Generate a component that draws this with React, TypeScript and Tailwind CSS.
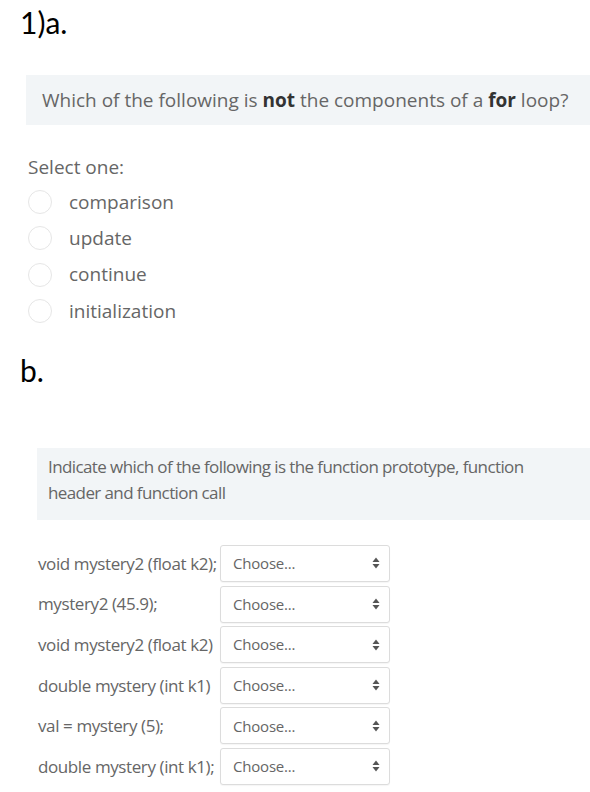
import React from 'react';

const options = ['comparison', 'update', 'continue', 'initialization'];

const rows = [
  'void mystery2 (float k2);',
  'mystery2 (45.9);',
  'void mystery2 (float k2)',
  'double mystery (int k1)',
  'val = mystery (5);',
  'double mystery (int k1);',
];

function UpDown() {
  return (
    <svg width="8" height="12" viewBox="0 0 8 12" className="shrink-0">
      <path d="M4 0.5 L7.5 5 L0.5 5 Z" fill="#555" />
      <path d="M4 11.5 L7.5 7 L0.5 7 Z" fill="#555" />
    </svg>
  );
}

function App() {
  return (
    <div className="w-[590px] h-[792px] bg-white overflow-hidden font-['Open_Sans',sans-serif]">
      <div className="pl-[20px] pt-[3px] text-[30px] leading-[38px] text-black font-['Lato',sans-serif]">1)a.</div>

      <div className="ml-[26px] mt-[34px] h-[50px] bg-[#f2f5f7] pl-[16px] flex items-center text-[19px] text-[#666] whitespace-nowrap">
        <span>
          Which of the following is <b className="font-bold text-[#333]">not</b> the components of a{' '}
          <b className="font-bold text-[#333]">for</b> loop?
        </span>
      </div>

      <div className="ml-[28px] mt-[30px] text-[19px] leading-[24px] text-[#666]">Select one:</div>

      <div className="mt-[5px] ml-[28px] flex flex-col">
        {options.map((o) => (
          <div key={o} className="h-[36.3px] flex items-center">
            <span className="w-[24px] h-[24px] rounded-full border border-[#e6e6e6] bg-white shrink-0" />
            <span className="ml-[17px] text-[19px] text-[#666]">{o}</span>
          </div>
        ))}
      </div>

      <div className="pl-[20px] mt-[22px] text-[30px] leading-[38px] text-black font-['Lato',sans-serif]">b.</div>

      <div className="ml-[37px] mt-[59px] h-[72px] bg-[#f2f5f7] pl-[11px] pt-[6px] text-[17px] leading-[26px] tracking-[-0.6px] text-[#666] whitespace-nowrap">
        Indicate which of the following is the function prototype, function
        <br />
        header and function call
      </div>

      <div className="mt-[25px] ml-[38px] flex flex-col gap-[4px]">
        {rows.map((r) => (
          <div key={r} className="flex items-center h-[36.6px]">
            <div className="w-[182px] text-[17px] tracking-[-0.4px] text-[#666] whitespace-nowrap">{r}</div>
            <div className="w-[170px] h-[37px] border border-[#dcdcdc] rounded-[3px] bg-white flex items-center justify-between pl-[12px] pr-[9px] shadow-[0_1px_1px_rgba(0,0,0,0.04)]">
              <span className="text-[15px] tracking-[-0.2px] text-[#666]">Choose...</span>
              <UpDown />
            </div>
          </div>
        ))}
      </div>
    </div>
  );
}

export default App;
